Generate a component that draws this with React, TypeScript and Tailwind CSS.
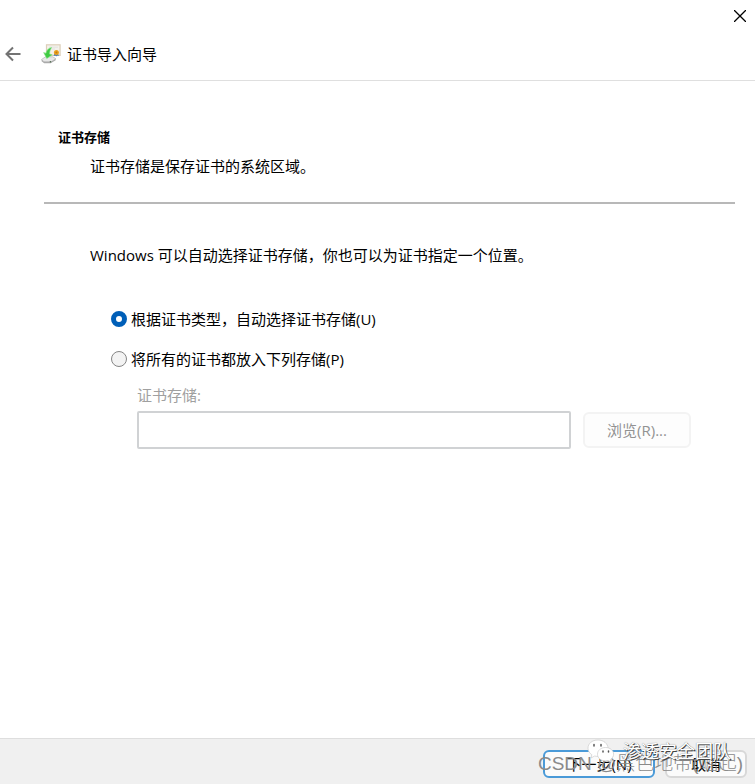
import { useState } from 'react'

function CertificateIcon() {
  return (
    <svg className="w-5 h-5" viewBox="0 0 20 20" aria-hidden="true">
      <rect x="5.5" y="0.8" width="13.6" height="10.6" fill="#f4f1ea" stroke="#dccfba" strokeWidth="1.2" />
      <path d="M8 3.2h9M8 5h6" stroke="#dedede" strokeWidth="0.8" />
      <path d="M13.8 9l-1.2 3 1.8-.5.8 1 .8-1 1.8.5-1-3z" fill="#3d75b5" />
      <circle cx="15.4" cy="8.6" r="2.5" fill="#eba220" />
      <circle cx="15.4" cy="8.6" r="1" fill="#c47d12" />
      <path d="M0.6 15.4l4-2.6h7.2l3 1.9-4.4 3.1H3z" fill="#e8e8e8" stroke="#b4b4b4" strokeWidth="0.7" />
      <path d="M0.6 15.4v1.9l2.6 1.9h6.4l5.1-3v-1.5l-4.4 3.1H3z" fill="#aaa" />
      <circle cx="9.5" cy="17.7" r="0.8" fill="#4d6b4d" />
      <path d="M10.6 3.4C7.4 4.2 5.4 6.2 5 9.2L2.6 8.6 5.8 14.6l5.4-3.8-2.6-.7c0-2.600.6-4.300 2-6.700z" fill="#3fca43" stroke="#86e486" strokeWidth="0.6" />
    </svg>
  )
}

function ChatIcon() {
  return (
    <svg className="w-7 h-6" viewBox="0 0 28 24" aria-hidden="true">
      <path
        d="M11 1C5 1 1 4.6 1 9.2c0 2.8 1.5 5 3.8 6.5L4 19l3.7-2c1 .3 2.2.4 3.3.4 5.6 0 10-3.7 10-8.2S16.6 1 11 1z"
        fill="#fff"
        stroke="#ccc"
        strokeWidth="0.7"
      />
      <path
        d="M18.5 8.5c-4.7 0-8 3-8 6.7s3.3 6.7 8 6.7c1 0 1.9-.1 2.8-.4l2.900 1.600-.8-2.600c2-1.300 3.200-3.200 3.200-5.300 0-3.700-3.400-6.700-8.100-6.700z"
        fill="#fff"
        stroke="#ccc"
        strokeWidth="0.7"
      />
      <path d="M7 5.5v1.500M14 5.500v1.500M16 12v1M21.500 12v1" stroke="#555" strokeWidth="1.500" strokeLinecap="round" />
    </svg>
  )
}

const radioClass =
  'appearance-none w-4 h-4 rounded-full border border-[#858585] bg-[#f3f3f3] checked:border-5 checked:border-[#005fb8] checked:bg-white'

export default function App() {
  const [store, setStore] = useState('auto')

  return (
    <div className="min-h-screen flex flex-col bg-white text-black text-[15px] leading-5 font-['Open_Sans','Noto_Sans_CJK_SC',sans-serif]">
      <div className="h-8 flex justify-end items-center pr-2">
        <button type="button" aria-label="关闭" className="p-px">
          <svg className="w-3 h-3" viewBox="0 0 12 12" fill="none" stroke="#000" strokeWidth="1.3">
            <path d="M0 0l12 12M12 0L0 12" />
          </svg>
        </button>
      </div>
      <header className="flex items-center border-b border-[#dfdfdf] pt-3 pb-4 pl-1">
        <button type="button" aria-label="返回" className="px-px">
          <svg className="w-4 h-4" viewBox="0 0 16 16" fill="none" stroke="#737373" strokeWidth="2">
            <path d="M15.500 8H2M8 1.500L1.500 8 8 14.500" />
          </svg>
        </button>
        <div className="flex items-center gap-1.5 ml-[19px]">
          <CertificateIcon />
          <h1>证书导入向导</h1>
        </div>
      </header>

      <main className="flex-1 pt-[46px]">
        <section className="ml-11 mr-5 border-b-2 border-[#b8b8b8] pb-[26px]">
          <h2 className="text-[13px] font-bold ml-3.5">证书存储</h2>
          <p className="ml-[46px] mt-[9px]">证书存储是保存证书的系统区域。</p>
        </section>
        <p className="mt-[41px] ml-[90px]">Windows 可以自动选择证书存储，你也可以为证书指定一个位置。</p>

        <div className="ml-[111px] mt-11 flex flex-col items-start gap-5">
          <label className="flex items-center gap-1">
            <input type="radio" name="store" className={radioClass} checked={store === 'auto'} onChange={() => setStore('auto')} />
            根据证书类型，自动选择证书存储(U)
          </label>
          <label className="flex items-center gap-1">
            <input type="radio" name="store" className={radioClass} checked={store === 'manual'} onChange={() => setStore('manual')} />
            将所有的证书都放入下列存储(P)
          </label>
        </div>
        <div className="ml-[137px] mr-16 mt-4">
          <label htmlFor="storeName" className="block text-[#a0a0a0]">
            证书存储:
          </label>
          <div className="flex items-center gap-3 mt-1.5">
            <input
              id="storeName"
              type="text"
              disabled={store === 'auto'}
              className="flex-1 min-w-0 h-[38px] px-2 bg-white border-2 border-[#d0d2d4] rounded-xs"
            />
            <button
              type="button"
              disabled={store === 'auto'}
              className="w-27 h-9 border-2 border-[#f3f3f3] bg-[#fdfdfd] rounded-md text-[#929292]"
            >
              浏览(R)...
            </button>
          </div>
        </div>
      </main>

      <footer className="relative h-[46px] border-t border-[#dedede] bg-[#f0f0f0] flex justify-end items-start gap-2.5 pt-[11px] pr-2">
        <button type="button" className="w-28 h-7 border-2 border-[#4a9ad8] bg-[#fbfbfb] rounded-md leading-none">
          下一步(N)
        </button>
        <button type="button" className="w-[82px] h-7 border-2 border-[#d8d8d8] bg-[#fbfbfb] rounded-md leading-none">
          取消
        </button>
        <span className="absolute right-3 bottom-2 text-[19px] leading-6 font-light text-[#8a8a8a] pointer-events-none font-['Liberation_Sans','Noto_Sans_CJK_SC',sans-serif]">
          CSDN @黑色地带(崛起)
        </span>
        <div className="absolute right-6 top-0 flex items-center gap-2 pointer-events-none">
          <ChatIcon />
          <span className="text-lg leading-6 text-white [text-shadow:1px_1px_0_#444,0_0_1px_#777]">渗透安全团队</span>
        </div>
      </footer>
    </div>
  )
}
